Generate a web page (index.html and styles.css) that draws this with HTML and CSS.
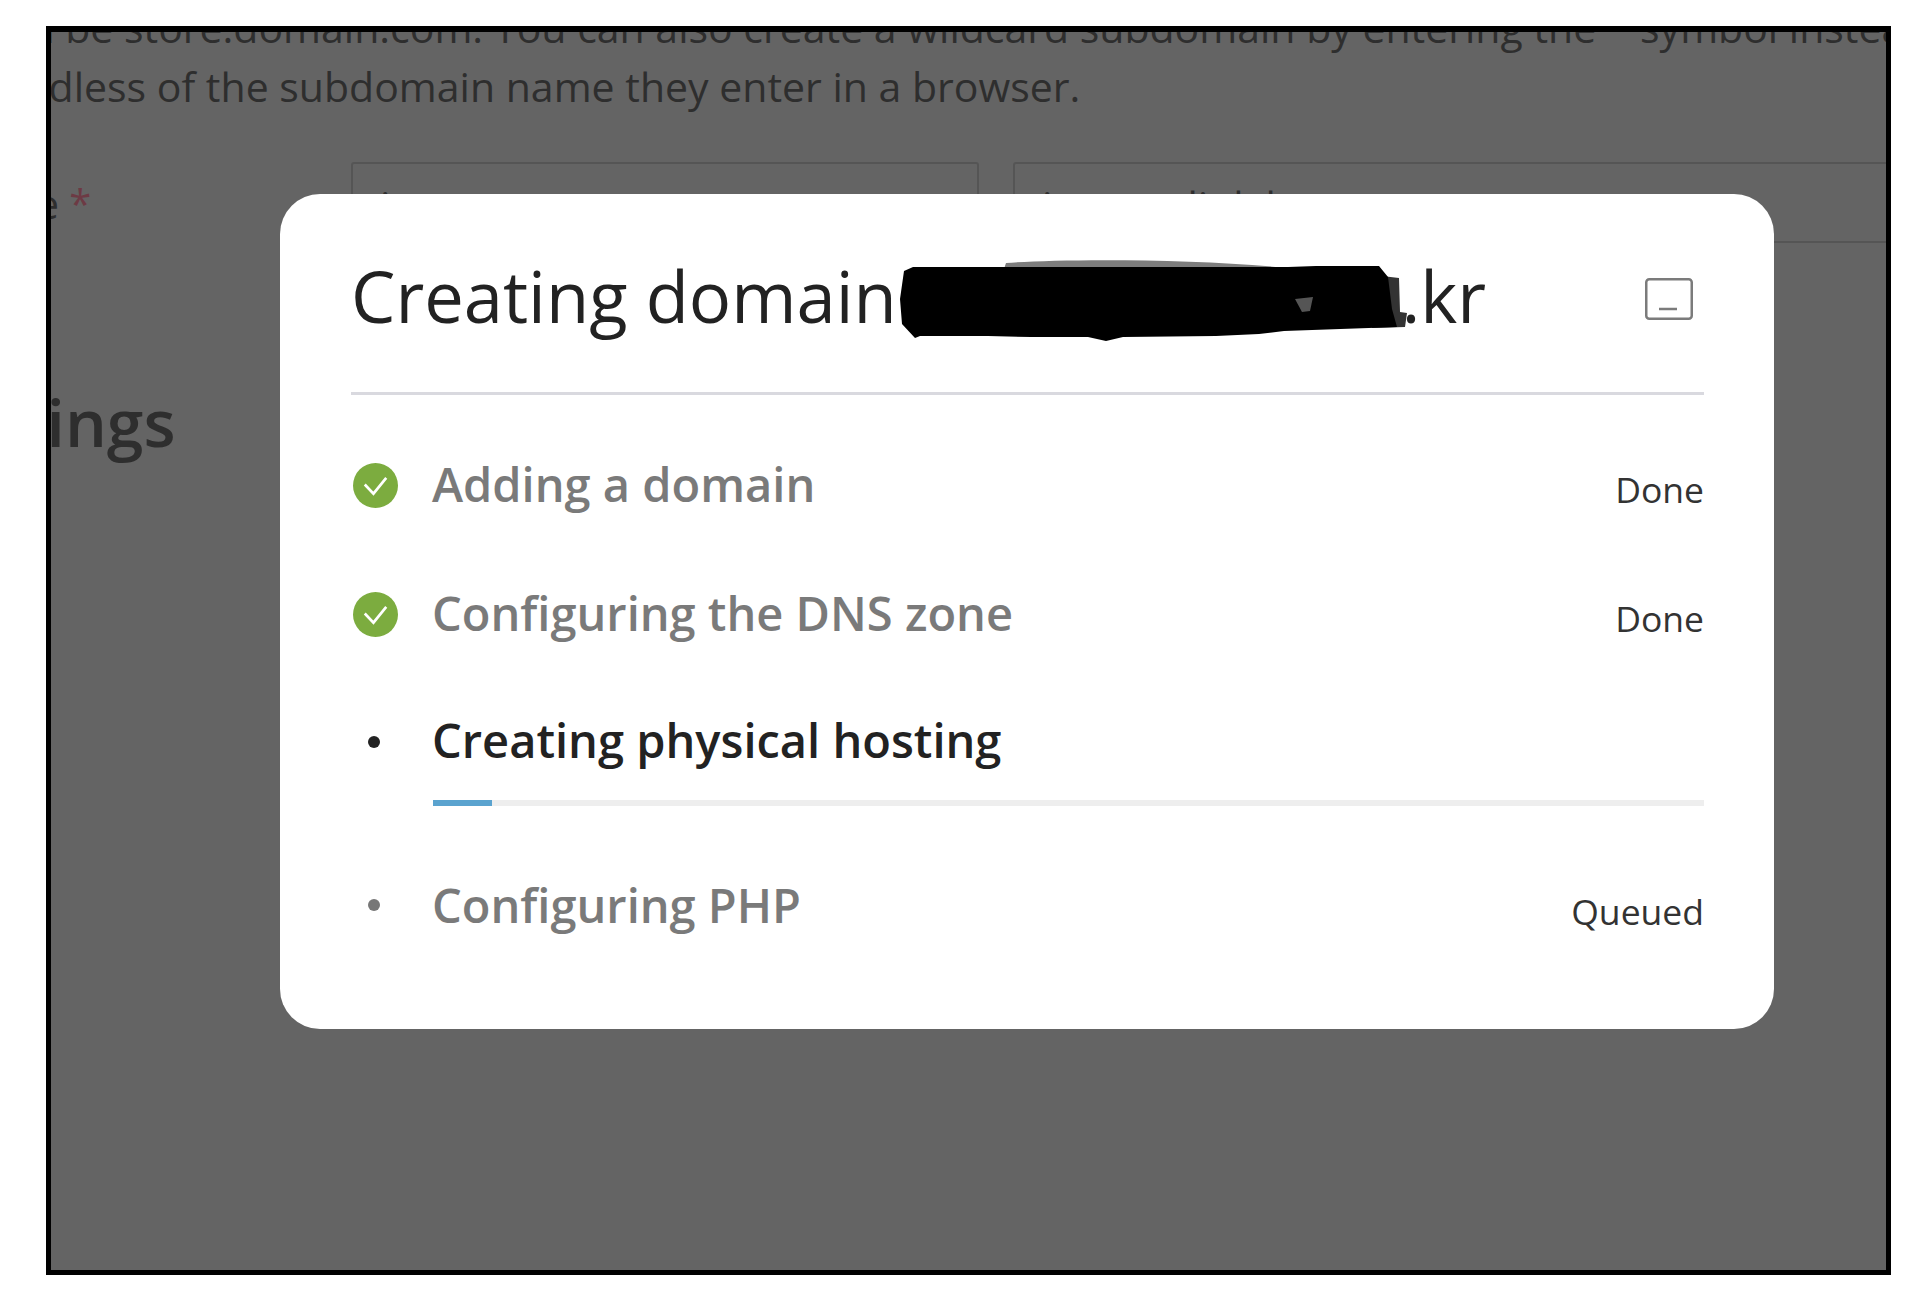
FILE: index.html
```html
<!DOCTYPE html>
<html lang="en">

<head>
    <meta charset="UTF-8">
    <meta name="viewport" content="width=device-width, initial-scale=1.0">
    <title>Creating domain</title>
    <link rel="stylesheet" href="styles.css">
</head>

<body>

    <div class="shot-frame">
        <!-- Page behind the dialog -->
        <div class="page-bg">
            <p class="hint-text hint-first">can be store.domain.com. You can also create a wildcard subdomain by entering the * symbol instead of a name</p>
            <p class="hint-text hint-second">regardless of the subdomain name they enter in a browser.</p>

            <div class="field-row">
                <div class="field-label">Name <span class="required">*</span></div>
                <div class="field-input field-short">it</div>
                <div class="field-input field-long">instant-link.kr</div>
            </div>

            <h2 class="section-title">Settings</h2>
        </div>

        <!-- Progress dialog -->
        <div class="dialog">
            <div class="dialog-head">
                <h1 class="dialog-title">
                    <span>Creating domain</span>
                    <svg class="redaction" viewBox="-2 0 508 83" aria-hidden="true">
                        <path fill="#7d7d7d" d="M102 10L104 4C150 0 290 -1 384 9Z" />
                        <path fill="#333" d="M480 17L497 19L498 53L505 54L503 68L470 69Z" />
                        <path fill="#000" d="M2 12L11 8L86 8L102 8L386 8L414 7L477 7L486 18L490 50L495 68L382 72L357 75L314 77L221 78L204 82L186 78L129 78L86 77L18 77L13 79L0 65L-2 40Z" />
                        <path fill="#555" d="M393 40L411 38L408 52L400 53Z" />
                    </svg>
                    <span class="domain-end">.kr</span>
                </h1>
                <button class="minimize-btn" aria-label="Minimize">
                    <svg viewBox="0 0 48 42" width="48" height="42">
                        <rect x="1.25" y="1.25" width="45.5" height="39.5" rx="3" fill="none" stroke="#7b7b7b" stroke-width="2.5" />
                        <path d="M14 31H32" stroke="#7b7b7b" stroke-width="2.5" />
                    </svg>
                </button>
            </div>

            <ul class="step-list">
                <li class="step step-done">
                    <span class="step-mark">
                        <svg viewBox="0 0 44 44" width="45" height="45">
                            <circle cx="22" cy="22" r="22" fill="#7cac3f" />
                            <path d="M11.5 21L20 30L32.5 14.5" fill="none" stroke="#fff" stroke-width="2.6" />
                        </svg>
                    </span>
                    <span class="step-name">Adding a domain</span>
                    <span class="step-status">Done</span>
                </li>
                <li class="step step-done">
                    <span class="step-mark">
                        <svg viewBox="0 0 44 44" width="45" height="45">
                            <circle cx="22" cy="22" r="22" fill="#7cac3f" />
                            <path d="M11.5 21L20 30L32.5 14.5" fill="none" stroke="#fff" stroke-width="2.6" />
                        </svg>
                    </span>
                    <span class="step-name">Configuring the DNS zone</span>
                    <span class="step-status">Done</span>
                </li>
                <li class="step step-active">
                    <span class="step-mark"><span class="dot"></span></span>
                    <span class="step-name">Creating physical hosting</span>
                </li>
                <li class="progress-track">
                    <div class="progress-fill"></div>
                </li>
                <li class="step step-queued">
                    <span class="step-mark"><span class="dot"></span></span>
                    <span class="step-name">Configuring PHP</span>
                    <span class="step-status">Queued</span>
                </li>
            </ul>
        </div>
    </div>

</body>

</html>
```

FILE: styles.css
```css
body {
    margin: 0;
    background-color: #fff;
    font-family: "Open Sans", "Noto Sans", sans-serif;
    padding: 26px 25px 25px 46px;
}

.shot-frame {
    position: relative;
    height: 1238px;
    border-style: solid;
    border-color: #000;
    border-width: 6px 5px 5px 5px;
    background-color: #646464;
    overflow: hidden;
}

.page-bg {
    color: #2e2e2e;
}

.hint-text {
    margin: 0;
    font-size: 41px;
    line-height: 59px;
    white-space: nowrap;
}

.hint-first {
    margin-top: -34px;
    margin-left: -64px;
}

.hint-second {
    margin-left: -104px;
}

.field-row {
    display: flex;
    margin-top: 46px;
}

.field-label {
    width: 404px;
    margin-left: -104px;
    padding-top: 14px;
    font-size: 40px;
    flex-shrink: 0;
}

.required {
    color: #6d3a44;
}

.field-input {
    height: 81px;
    padding: 13px 27px 0;
    box-sizing: border-box;
    border: 2px solid #555;
    border-radius: 3px;
    font-size: 41px;
    flex-shrink: 0;
}

.field-short {
    width: 628px;
    margin-right: 34px;
}

.field-long {
    width: 1000px;
}

.section-title {
    margin: 133px 0 0 -131px;
    font-size: 66px;
    font-weight: 600;
}

.dialog {
    position: absolute;
    left: 229px;
    top: 162px;
    width: 1494px;
    height: 835px;
    box-sizing: border-box;
    padding: 0 70px 0 71px;
    background-color: #fff;
    border-radius: 40px;
}

.dialog-head {
    display: flex;
    justify-content: space-between;
    align-items: center;
    height: 201px;
    box-sizing: border-box;
    padding-top: 6px;
    border-bottom: 3px solid #d9d9df;
}

.dialog-title {
    display: flex;
    align-items: center;
    margin: 0;
    font-size: 70.5px;
    font-weight: 400;
    color: #222;
    white-space: nowrap;
}

.redaction {
    width: 508px;
    height: 83px;
    margin: 9px 0 0 3px;
}

.domain-end {
    margin-left: -6px;
}

.minimize-btn {
    display: flex;
    padding: 0;
    margin: 5px 11px 0 0;
    border: none;
    background: none;
}

.step-list {
    list-style: none;
    margin: 0;
    padding: 26px 0 0;
}

.step {
    display: flex;
    align-items: center;
    height: 129px;
}

.step-mark {
    display: flex;
    justify-content: center;
    width: 81px;
    padding-right: 32px;
    box-sizing: border-box;
    flex-shrink: 0;
}

.dot {
    width: 12px;
    height: 12px;
    margin-right: 3px;
    border-radius: 50%;
    background-color: #222;
}

.step-name {
    margin-top: -4px;
    font-size: 47px;
    font-weight: 600;
    color: #7a7a7a;
}

.step-status {
    margin-left: auto;
    padding-top: 12px;
    font-size: 35.5px;
    color: #333;
}

.step-done .step-status {
    padding-top: 7px;
}

.step-active {
    height: 121px;
    box-sizing: border-box;
    padding-top: 5px;
}

.step-active .step-name {
    color: #222;
}

.step-queued {
    margin-top: 34px;
}

.step-queued .step-name {
    margin-top: 0;
}

.step-queued .dot {
    background-color: #777;
}

.progress-track {
    height: 6px;
    margin: 0 0 0 82px;
    background-color: #eee;
}

.progress-fill {
    width: 59px;
    height: 100%;
    background-color: #5aa3cf;
}
```
